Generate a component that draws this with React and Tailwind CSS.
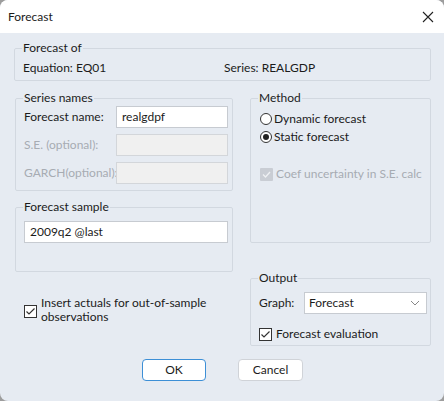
import React from "react";

function Group({ label, className = "", children }) {
  return (
    <fieldset className={"border border-[#d2d8e0] rounded-[2px] pl-[8px] pr-[3px] " + className}>
      <legend className="px-[1px] -ml-[1px] leading-[16px]">{label}</legend>
      {children}
    </fieldset>
  );
}

function Check({ disabled = false }) {
  if (disabled) {
    return (
      <span className="w-[13px] h-[13px] shrink-0 bg-[#c9cdd4] rounded-[1px] flex items-center justify-center">
        <svg width="11" height="11" viewBox="0 0 11 11">
          <polyline points="2,5.5 4.5,8 9,3" fill="none" stroke="#eef0f3" strokeWidth="1.3" />
        </svg>
      </span>
    );
  }
  return (
    <span className="w-[13px] h-[13px] shrink-0 bg-white border border-[#333] flex items-center justify-center">
      <svg width="11" height="11" viewBox="0 0 11 11">
        <polyline points="1.5,5.5 4,8 9.5,2.5" fill="none" stroke="#333" strokeWidth="1.2" />
      </svg>
    </span>
  );
}

function Radio({ checked }) {
  return (
    <span className="w-[12px] h-[12px] shrink-0 rounded-full bg-white border border-[#333] flex items-center justify-center">
      {checked && <span className="w-[6px] h-[6px] rounded-full bg-[#222]" />}
    </span>
  );
}

export default function App() {
  return (
    <div className="w-[444px] h-[401px] bg-[#9d9d9d]">
      <div className="h-full rounded-[8px] overflow-hidden bg-[#e6ebf2] flex flex-col text-[12px] text-[#1b1b1b] font-['Lato',sans-serif]">
        <div className="h-[33px] bg-white flex items-center justify-between pl-[8px] pr-[8px] shrink-0">
          <span className="leading-[16px]">Forecast</span>
          <svg width="12" height="12" viewBox="0 0 12 12" className="mr-[2px]">
            <path d="M1 1 L11 11 M11 1 L1 11" stroke="#222" strokeWidth="1.1" fill="none" />
          </svg>
        </div>

        <div className="pl-[14px] pr-[13px] pt-[7px]">
          <Group label="Forecast of">
            <div className="flex pt-[4px] pb-[4px] leading-[16px]">
              <span className="w-[201px]">Equation: EQ01</span>
              <span>Series: REALGDP</span>
            </div>
          </Group>

          <div className="flex mt-[9px]">
            <div className="ml-[1px] w-[218px] flex flex-col">
              <Group label="Series names">
                <div className="flex flex-col gap-[6px] pb-[6px]">
                  <div className="flex items-center h-[22px]">
                    <span className="w-[92px] whitespace-nowrap">Forecast name:</span>
                    <div className="w-[112px] h-[22px] bg-white border border-[#c7cbd1] flex items-center pl-[5px]">realgdpf</div>
                  </div>
                  <div className="flex items-center h-[22px]">
                    <span className="w-[92px] text-[#a7acb3] whitespace-nowrap">S.E. (optional):</span>
                    <div className="w-[112px] h-[22px] bg-[#f0f0f0] border border-[#d3d6da]" />
                  </div>
                  <div className="flex items-center h-[22px]">
                    <span className="w-[92px] text-[#a7acb3] whitespace-nowrap">GARCH(optional):</span>
                    <div className="w-[112px] h-[22px] bg-[#f0f0f0] border border-[#d3d6da]" />
                  </div>
                </div>
              </Group>

              <Group label="Forecast sample" className="mt-[8px]">
                <div className="pt-[6px] pb-[28px]">
                  <div className="w-[204px] h-[22px] bg-white border border-[#c7cbd1] flex items-center pl-[5px]">2009q2 @last</div>
                </div>
              </Group>

              <div className="flex items-start mt-[24px] ml-[9px] leading-[14px]">
                <span className="mt-[9px]"><Check /></span>
                <span className="ml-[4px]">Insert actuals for out-of-sample<br />observations</span>
              </div>
            </div>

            <div className="ml-[17px] flex-1 flex flex-col">
              <Group label="Method">
                <div className="pt-[5px] pb-[60px] leading-[16px]">
                  <div className="flex items-center h-[16px] ml-[1px]">
                    <Radio checked={false} />
                    <span className="ml-[2px]">Dynamic forecast</span>
                  </div>
                  <div className="flex items-center h-[16px] mt-[2px] ml-[1px]">
                    <Radio checked={true} />
                    <span className="ml-[2px]">Static forecast</span>
                  </div>
                  <div className="flex items-center h-[16px] mt-[21px] ml-[1px]">
                    <Check disabled />
                    <span className="ml-[3px] text-[#a7acb3] whitespace-nowrap">Coef uncertainty in S.E. calc</span>
                  </div>
                </div>
              </Group>

              <Group label="Output" className="mt-[27px]">
                <div className="pt-[6px] pb-[3px] leading-[16px]">
                  <div className="flex items-center h-[22px]">
                    <span className="w-[45px]">Graph:</span>
                    <div className="w-[123px] h-[22px] bg-white border border-[#c7cbd1] flex items-center justify-between pl-[4px] pr-[6px]">
                      <span>Forecast</span>
                      <svg width="10" height="6" viewBox="0 0 10 6">
                        <polyline points="1,1 5,5 9,1" fill="none" stroke="#888" strokeWidth="1" />
                      </svg>
                    </div>
                  </div>
                  <div className="flex items-center h-[16px] mt-[12px]">
                    <Check />
                    <span className="ml-[4px]">Forecast evaluation</span>
                  </div>
                </div>
              </Group>
            </div>
          </div>

          <div className="flex justify-center gap-[32px] mt-[13px]">
            <button className="w-[64px] h-[22px] bg-white rounded-[4px] border border-[#3d8fd6] flex items-center justify-center leading-[16px]">OK</button>
            <button className="w-[65px] h-[22px] bg-white rounded-[4px] border border-[#d0d3d8] flex items-center justify-center leading-[16px]">Cancel</button>
          </div>
        </div>
      </div>
    </div>
  );
}
